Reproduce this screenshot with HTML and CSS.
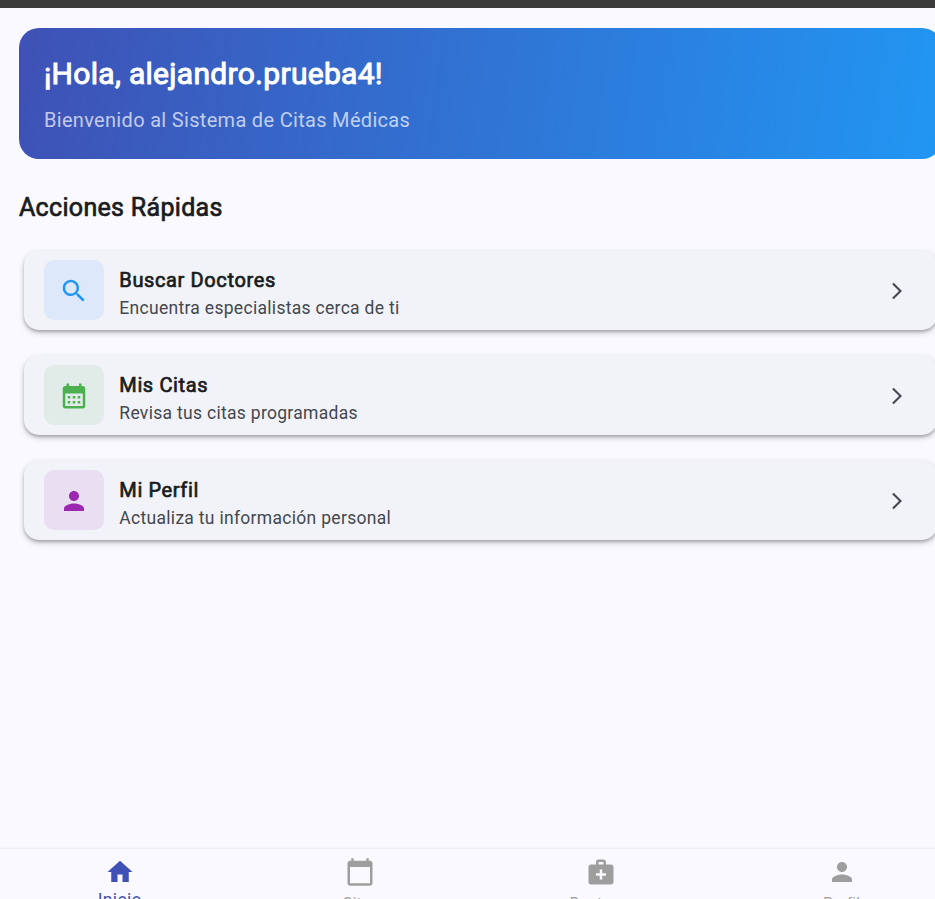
FILE: index.html
```html
<!DOCTYPE html>
<html lang="es">
<head>
<meta charset="utf-8">
<title>Citas Médicas</title>
<link rel="stylesheet" href="styles.css">
</head>
<body>
<div class="app">
  <div class="topbar"></div>
  <main class="content">
    <section class="hero">
      <h1>¡Hola, alejandro.prueba4!</h1>
      <p>Bienvenido al Sistema de Citas Médicas</p>
    </section>
    <h2>Acciones Rápidas</h2>
    <div class="cards">
      <article class="card">
        <div class="tile blue"><svg class="icon" viewBox="0 0 24 24"><path d="M15.5 14h-.79l-.28-.27C15.41 12.59 16 11.11 16 9.5 16 5.91 13.09 3 9.5 3S3 5.91 3 9.5 5.91 16 9.5 16c1.61 0 3.09-.59 4.23-1.57l.27.28v.79l5 4.99L20.49 19l-4.99-5zm-6 0C7.01 14 5 11.99 5 9.5S7.01 5 9.5 5 14 7.01 14 9.5 11.99 14 9.5 14z"/></svg></div>
        <div class="text"><h3>Buscar Doctores</h3><p>Encuentra especialistas cerca de ti</p></div>
        <svg class="chevron" viewBox="0 0 24 24"><path d="M6.23 20.23L8 22l10-10L8 2 6.23 3.77 14.46 12z"/></svg>
      </article>
      <article class="card">
        <div class="tile green"><svg class="icon" viewBox="0 0 24 24"><path d="M19 4h-1V2h-2v2H8V2H6v2H5c-1.11 0-1.99.9-1.99 2L3 20c0 1.1.89 2 2 2h14c1.1 0 2-.9 2-2V6c0-1.1-.9-2-2-2zm0 16H5V10h14v10zM9 14H7v-2h2v2zm4 0h-2v-2h2v2zm4 0h-2v-2h2v2zm-8 4H7v-2h2v2zm4 0h-2v-2h2v2zm4 0h-2v-2h2v2z"/></svg></div>
        <div class="text"><h3>Mis Citas</h3><p>Revisa tus citas programadas</p></div>
        <svg class="chevron" viewBox="0 0 24 24"><path d="M6.23 20.23L8 22l10-10L8 2 6.23 3.77 14.46 12z"/></svg>
      </article>
      <article class="card">
        <div class="tile purple"><svg class="icon" viewBox="0 0 24 24"><path d="M12 12c2.21 0 4-1.79 4-4s-1.79-4-4-4-4 1.79-4 4 1.79 4 4 4zm0 2c-2.67 0-8 1.34-8 4v2h16v-2c0-2.66-5.33-4-8-4z"/></svg></div>
        <div class="text"><h3>Mi Perfil</h3><p>Actualiza tu información personal</p></div>
        <svg class="chevron" viewBox="0 0 24 24"><path d="M6.23 20.23L8 22l10-10L8 2 6.23 3.77 14.46 12z"/></svg>
      </article>
    </div>
  </main>
  <nav class="nav">
    <a class="item active"><svg class="icon" viewBox="0 0 24 24"><path d="M10 20v-6h4v6h5v-8h3L12 3 2 12h3v8z"/></svg><span>Inicio</span></a>
    <a class="item"><svg class="icon" viewBox="0 0 24 24"><path d="M20 3h-1V1h-2v2H7V1H5v2H4c-1.1 0-2 .9-2 2v16c0 1.1.9 2 2 2h16c1.1 0 2-.9 2-2V5c0-1.1-.9-2-2-2zm0 18H4V8h16v13z"/></svg><span>Citas</span></a>
    <a class="item"><svg class="icon" viewBox="0 0 24 24"><path d="M20 6h-4V4c0-1.1-.9-2-2-2h-4c-1.1 0-2 .9-2 2v2H4c-1.1 0-2 .9-2 2v12c0 1.1.9 2 2 2h16c1.1 0 2-.9 2-2V8c0-1.1-.9-2-2-2zM10 4h4v2h-4V4zm6 11h-3v3h-2v-3H8v-2h3v-3h2v3h3v2z"/></svg><span>Doctores</span></a>
    <a class="item"><svg class="icon" viewBox="0 0 24 24"><path d="M12 12c2.21 0 4-1.79 4-4s-1.79-4-4-4-4 1.79-4 4 1.79 4 4 4zm0 2c-2.67 0-8 1.34-8 4v2h16v-2c0-2.66-5.33-4-8-4z"/></svg><span>Perfil</span></a>
  </nav>
</div>
</body>
</html>
```
FILE: styles.css
```css
* { box-sizing: border-box; }

body {
  margin: 0;
  height: 899px;
  overflow: hidden;
  background: #faf9ff;
  color: #191c20;
  font-family: Roboto, sans-serif;
}

h1, h2, h3, p { margin: 0; font-weight: 400; white-space: nowrap; }

h1, h2, h3 { -webkit-text-stroke: 0.7px currentColor; }

.app {
  width: 962.5px;
  height: 899px;
  margin-left: -1px;
  display: flex;
  flex-direction: column;
}

.topbar { flex: none; height: 8px; background: #3b3b3b; }

.content { flex: 1; min-height: 0; padding: 20px; }

.hero {
  height: 131.3px;
  padding: 25px;
  border-radius: 20px;
  background: linear-gradient(98.1deg, #3f51b5, #2196f3);
  color: #fff;
}

.hero h1 {
  font-size: 30px;
  line-height: 42px;
  letter-spacing: 0.3px;
  -webkit-text-stroke-width: 1px;
}

.hero p {
  margin-top: 10px;
  font-size: 20px;
  line-height: 30px;
  letter-spacing: 0.3125px;
  color: rgba(255, 255, 255, 0.7);
}

h2 { margin-top: 32px; font-size: 25px; line-height: 34px; letter-spacing: 0.3125px; }

.cards { display: flex; flex-direction: column; gap: 25px; padding: 25px 5px 0; }

.card {
  display: flex;
  align-items: center;
  height: 80px;
  padding: 0 30px 0 20px;
  border-radius: 15px;
  background: #f2f3f9;
  box-shadow: 0 2px 3px rgba(0, 0, 0, 0.22), 0 3px 6px rgba(0, 0, 0, 0.17);
}

.tile {
  display: grid;
  place-items: center;
  width: 60px;
  height: 60px;
  border-radius: 10px;
}

.icon { display: block; flex: none; width: 30px; height: 30px; fill: currentColor; }

.tile .icon { margin-top: 1px; }

.blue { color: #2196f3; background: #dde9fa; }
.green { color: #4caf50; background: #e1ece8; }
.purple { color: #9c27b0; background: #e9def2; }

.text { flex: 1; padding: 5px 0 0 15.3px; }

.text h3 { font-size: 20px; line-height: 30px; letter-spacing: 0.625px; }

.text p { font-size: 17.5px; line-height: 26px; letter-spacing: 0.3px; color: #43474e; }

.chevron { width: 20px; height: 20px; margin-top: 1px; fill: #43474e; }

.nav {
  flex: none;
  display: flex;
  height: 50px;
  padding-top: 8px;
  overflow: hidden;
  background: #faf9ff;
  box-shadow: 0 -1px 2px 0.5px rgba(0, 0, 0, 0.06);
  color: #9e9e9e;
}

.item {
  flex: 1;
  display: flex;
  flex-direction: column;
  align-items: center;
  padding-left: 1px;
}

.item span { margin-top: 6px; font-size: 15px; line-height: 21px; letter-spacing: 0.3px; }

.active { color: #3f51b5; }

.item.active span { margin-top: 1px; font-size: 17.5px; line-height: 25px; letter-spacing: 0.35px; }
```
